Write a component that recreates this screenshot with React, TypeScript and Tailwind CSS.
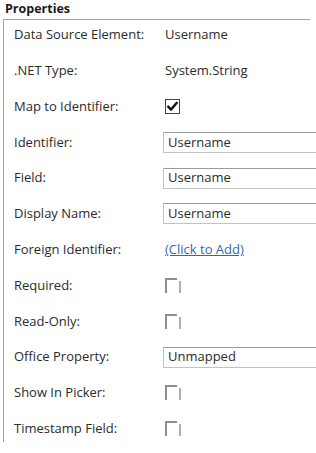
import React from "react";

const font = { fontFamily: '"Open Sans", "Noto Sans", sans-serif' };

function Unchecked() {
  return (
    <svg width="17" height="15" viewBox="0 0 17 15" className="block">
      <path d="M1 15 V1 H12" fill="none" stroke="#8f8f8f" strokeWidth="2" />
      <path d="M15 3 V15" fill="none" stroke="#8f8f8f" strokeWidth="1.4" />
    </svg>
  );
}

function Checked() {
  return (
    <svg width="15" height="15" viewBox="0 0 15 15" className="block">
      <rect x="0.5" y="0.5" width="14" height="14" fill="#fff" stroke="#444" strokeWidth="1" />
      <path d="M3.2 7.6 L6 10.6 L11.8 3.8" fill="none" stroke="#111" strokeWidth="2.4" strokeLinecap="round" strokeLinejoin="round" />
    </svg>
  );
}

function Input({ value }: { value: string }) {
  return (
    <div className="-ml-[2px] h-[21px] w-[170px] shrink-0 flex items-center border border-[#c2c2c2] border-t-[#9c9c9c] bg-white pl-[4px] text-[13px] text-[#2b2b2b]">
      {value}
    </div>
  );
}

type Row = { label: string; value: React.ReactNode };

const rows: Row[] = [
  { label: "Data Source Element:", value: <span>Username</span> },
  { label: ".NET Type:", value: <span>System.String</span> },
  { label: "Map to Identifier:", value: <Checked /> },
  { label: "Identifier:", value: <Input value="Username" /> },
  { label: "Field:", value: <Input value="Username" /> },
  { label: "Display Name:", value: <Input value="Username" /> },
  {
    label: "Foreign Identifier:",
    value: <span className="text-[#2f6aa8] underline">(Click to Add)</span>,
  },
  { label: "Required:", value: <Unchecked /> },
  { label: "Read-Only:", value: <Unchecked /> },
  { label: "Office Property:", value: <Input value="Unmapped" /> },
  { label: "Show In Picker:", value: <Unchecked /> },
  { label: "Timestamp Field:", value: <Unchecked /> },
];

export default function App() {
  return (
    <div className="w-[316px] h-[453px] bg-white overflow-hidden text-[#2b2b2b]" style={font}>
      <div className="h-[19px] pl-[5px] pt-[1px] text-[12.5px] font-bold leading-[16px] text-[#1a1a1a]">
        Properties
      </div>
      <div className="ml-[3px] w-[307px] h-[423px] border-t border-l border-[#a3a3a3] pt-[5px]">
        {rows.map((r) => (
          <div key={r.label} className="h-[35.8px] flex items-start">
            <div className="h-[20px] flex items-center w-[161px] shrink-0 pl-[10px] text-[13px] whitespace-nowrap">
              {r.label}
            </div>
            <div className="h-[20px] flex items-center text-[13px] whitespace-nowrap">
              {r.value}
            </div>
          </div>
        ))}
      </div>
    </div>
  );
}
